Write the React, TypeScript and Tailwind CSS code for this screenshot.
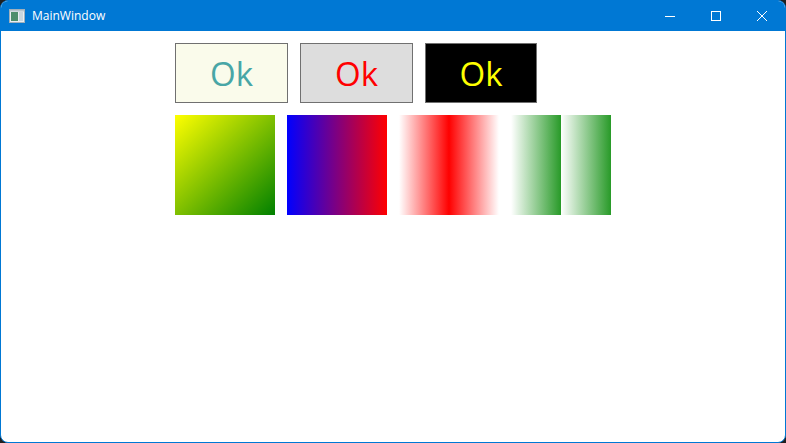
export default function App() {
  const font = { fontFamily: '"Segoe UI", "Open Sans", "Noto Sans", sans-serif' };

  return (
    <div className="h-[443px] w-[786px] bg-[#1f1f1f]" style={font}>
      <div className="flex h-full w-full flex-col overflow-hidden rounded-[8px] border border-[#0078d4] bg-white">
        {/* Title bar */}
        <div className="flex h-[30px] shrink-0 items-center bg-[#0078d4] text-white">
          <svg className="ml-[8px]" width="16" height="14" viewBox="0 0 16 14">
            <rect x="0.5" y="0.5" width="15" height="13" fill="#e8eef2" stroke="#9fb0bd" />
            <rect x="2" y="3" width="7" height="9" fill="#4d8e6c" />
            <rect x="10" y="3" width="4" height="9" fill="#c9d6de" />
            <rect x="1" y="1" width="14" height="1.5" fill="#b7c4cc" />
          </svg>
          <span className="ml-[7px] text-[12px] leading-none">MainWindow</span>
          <div className="ml-auto flex h-full items-center">
            <div className="flex h-full w-[46px] items-center justify-center">
              <svg width="10" height="10" viewBox="0 0 10 10">
                <line x1="0" y1="5.5" x2="10" y2="5.5" stroke="white" strokeWidth="1" />
              </svg>
            </div>
            <div className="flex h-full w-[46px] items-center justify-center">
              <svg width="10" height="10" viewBox="0 0 10 10">
                <rect x="0.5" y="0.5" width="9" height="9" fill="none" stroke="white" strokeWidth="1" />
              </svg>
            </div>
            <div className="flex h-full w-[46px] items-center justify-center">
              <svg width="10" height="10" viewBox="0 0 10 10">
                <line x1="0" y1="0" x2="10" y2="10" stroke="white" strokeWidth="1" />
                <line x1="10" y1="0" x2="0" y2="10" stroke="white" strokeWidth="1" />
              </svg>
            </div>
          </div>
        </div>

        {/* Content */}
        <div className="flex flex-col gap-[12px] pl-[174px] pt-[12px]">
          <div className="flex gap-[12px]">
            <div className="flex h-[60px] w-[113px] items-center justify-center border border-[#707070] bg-[#fafbeb] text-[33px] leading-none text-[#48a6a6]">
              Ok
            </div>
            <div className="flex h-[60px] w-[113px] items-center justify-center border border-[#707070] bg-[#dddddd] text-[33px] leading-none text-[#ff0000]">
              Ok
            </div>
            <div className="flex h-[60px] w-[112px] items-center justify-center border border-[#707070] bg-black text-[33px] leading-none text-[#ffff00]">
              Ok
            </div>
          </div>
          <div className="flex gap-[12px]">
            <div className="h-[100px] w-[100px] bg-[linear-gradient(135deg,#ffff00,#008000)]" />
            <div className="h-[100px] w-[100px] bg-[linear-gradient(90deg,#0000ff,#ff0000)]" />
            <div className="h-[100px] w-[100px] bg-[linear-gradient(90deg,#ffffff,#ff0000,#ffffff)]" />
            <div className="h-[100px] w-[100px] bg-[repeating-linear-gradient(90deg,#ffffff_0px,#289a28_50px)]" />
          </div>
        </div>
      </div>
    </div>
  );
}
